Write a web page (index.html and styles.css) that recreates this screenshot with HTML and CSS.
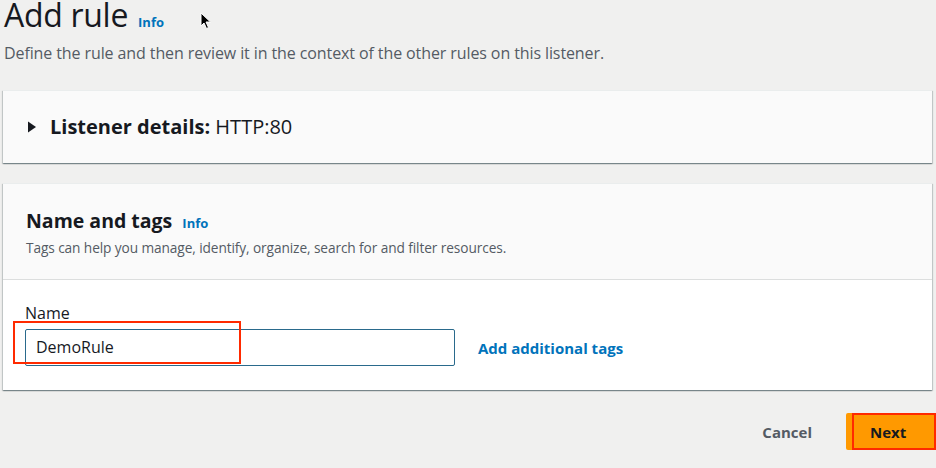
FILE: index.html
```html
<!DOCTYPE html>
<html>
<head>
<meta charset="utf-8">
<link rel="stylesheet" href="styles.css">
</head>
<body>
<div class="page">
  <header class="page-head">
    <h1 class="title">Add rule <a class="info info-title">Info</a></h1>
    <p class="subtitle">Define the rule and then review it in the context of the other rules on this listener.</p>
  </header>

  <section class="card card-listener">
    <div class="expander">
      <svg class="caret" width="10" height="12" viewBox="0 0 10 12"><path d="M1 0.5 L9 6 L1 11.5 Z" fill="#16191f"/></svg>
      <span class="exp-label"><b>Listener details:</b> HTTP:80</span>
    </div>
  </section>

  <section class="card card-tags">
    <div class="card-header">
      <h2 class="card-title">Name and tags <a class="info info-card">Info</a></h2>
      <p class="card-desc">Tags can help you manage, identify, organize, search for and filter resources.</p>
    </div>
    <div class="card-body">
      <label class="field-label">Name</label>
      <div class="field-row">
        <div class="input-wrap">
          <div class="input">DemoRule</div>
          <span class="annot annot-input"></span>
        </div>
        <a class="link-add">Add additional tags</a>
      </div>
    </div>
  </section>

  <footer class="actions">
    <button class="btn-cancel">Cancel</button>
    <div class="next-wrap">
      <button class="btn-next">Next</button>
      <span class="annot annot-next"></span>
    </div>
  </footer>

  <svg class="cursor" width="12" height="18" viewBox="0 0 12 18"><path d="M1 1 L1 14 L4 11 L6.5 16.5 L8.5 15.5 L6 10 L10.5 10 Z" fill="#000" stroke="#fff" stroke-width="1"/></svg>
</div>
</body>
</html>
```

FILE: styles.css
```css
* { box-sizing: border-box; }
html, body {
  margin: 0;
  padding: 0;
  background: #f0f0ef;
  font-family: "Open Sans", "Noto Sans", sans-serif;
  color: #16191f;
}
.page {
  position: relative;
  width: 936px;
  height: 468px;
  overflow: hidden;
  padding: 0 4px 0 4px;
}
.page-head { padding-top: 0; }
.title {
  margin: 0;
  font-size: 32px;
  font-weight: 400;
  line-height: 28px;
  padding-top: 1px;
  letter-spacing: -0.3px;
  color: #16191f;
  display: flex;
  align-items: baseline;
}
.info {
  color: #0073bb;
  font-weight: 700;
  font-size: 13px;
  letter-spacing: 0;
}
.info-title { margin-left: 10px; }
.subtitle {
  margin: 6px 0 0 0;
  font-size: 16px;
  line-height: 22px;
  color: #545b64;
  letter-spacing: -0.1px;
}
.card {
  background: #fafafa;
  margin-right: 0;
  width: 929px;
  margin-left: -1px;
  box-shadow: 0 1px 1px 0 rgba(0,28,36,0.3), 1px 1px 1px 0 rgba(0,28,36,0.15), -1px 1px 1px 0 rgba(0,28,36,0.15);
  border-top: 1px solid #eaeded;
}
.card-listener {
  margin-top: 26px;
  height: 73px;
  display: flex;
  align-items: center;
}
.expander {
  display: flex;
  align-items: center;
  padding-left: 24px;
  gap: 13px;
}
.caret { display: block; }
.exp-label {
  font-size: 20px;
  line-height: 26px;
  color: #16191f;
}
.exp-label b { font-weight: 700; }
.card-tags { margin-top: 20px; }
.card-header {
  padding: 23px 23px 18px 23px;
  border-bottom: 1px solid #dcdede;
  height: 96px;
}
.card-title {
  margin: 0;
  font-size: 19.5px;
  line-height: 27px;
  font-weight: 700;
  display: flex;
  align-items: baseline;
}
.info-card { margin-left: 10px; }
.card-desc {
  margin: 1px 0 0 0;
  font-size: 13.7px;
  line-height: 19px;
  color: #545b64;
  letter-spacing: -0.1px;
}
.card-body {
  background: #fff;
  padding: 23px 23px 23px 22px;
  height: 110px;
}
.field-label {
  display: block;
  font-size: 16px;
  line-height: 20px;
  color: #16191f;
  margin-bottom: 6px;
}
.field-row {
  display: flex;
  align-items: center;
  gap: 23px;
}
.input-wrap { position: relative; }
.input {
  width: 430px;
  height: 37px;
  border: 1px solid #2a6a8c;
  border-radius: 2px;
  background: #fff;
  padding: 0 10px;
  font-size: 16px;
  line-height: 35px;
  color: #16191f;
}
.annot {
  position: absolute;
  border: 2px solid #ff2a00;
  pointer-events: none;
}
.annot-input {
  left: -12px;
  top: -8px;
  width: 228px;
  height: 43px;
}
.link-add {
  color: #0073bb;
  font-weight: 700;
  font-size: 15px;
  line-height: 20px;
}
.actions {
  display: flex;
  justify-content: flex-end;
  align-items: center;
  margin-top: 23px;
  margin-right: -4px;
  gap: 34px;
}
.btn-cancel {
  background: none;
  border: 0;
  padding: 0;
  font-family: inherit;
  font-weight: 700;
  font-size: 15px;
  color: #545b64;
}
.next-wrap { position: relative; }
.btn-next {
  display: block;
  width: 90px;
  height: 37px;
  background: #ff9900;
  border: 0;
  border-radius: 2px 0 0 2px;
  font-family: inherit;
  font-weight: 700;
  font-size: 15px;
  color: #16191f;
  text-align: left;
  padding: 0 0 0 24px;
}
.annot-next {
  left: 6px;
  top: 0;
  width: 84px;
  height: 37px;
}
.cursor {
  position: absolute;
  left: 200px;
  top: 12px;
}
```
